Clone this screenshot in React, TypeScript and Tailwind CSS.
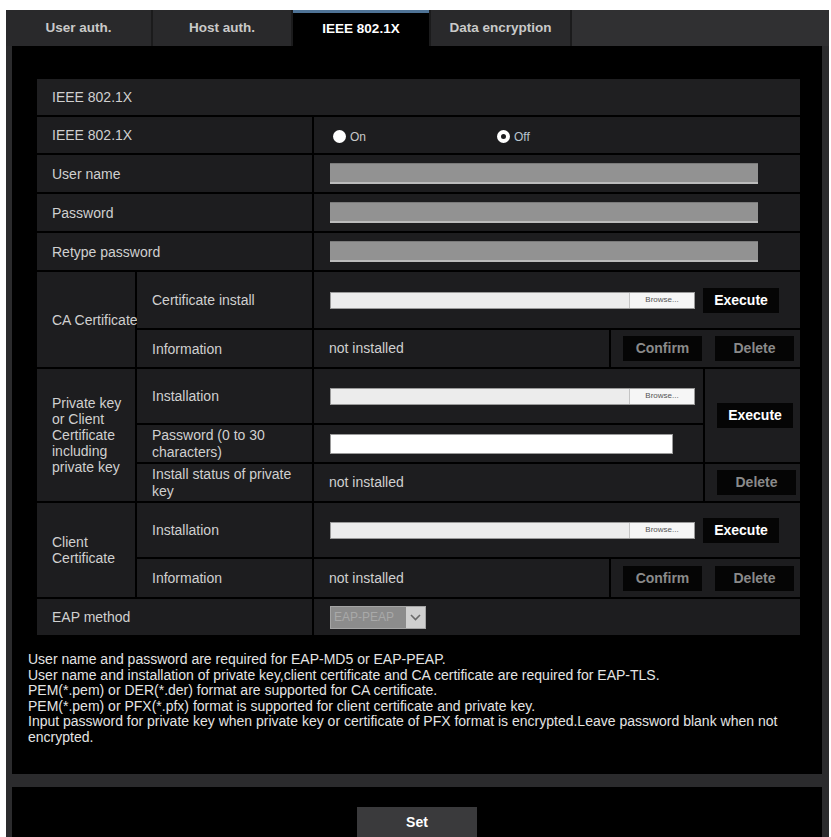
import React from "react";

const tabs = [
  { label: "User auth.", w: "w-[145px]" },
  { label: "Host auth.", w: "w-[138px]" },
  { label: "IEEE 802.1X", w: "w-[136px]", active: true },
  { label: "Data encryption", w: "w-[139px]" },
];

const notes = [
  "User name and password are required for EAP-MD5 or EAP-PEAP.",
  "User name and installation of private key,client certificate and CA certificate are required for EAP-TLS.",
  "PEM(*.pem) or DER(*.der) format are supported for CA certificate.",
  "PEM(*.pem) or PFX(*.pfx) format is supported for client certificate and private key.",
  "Input password for private key when private key or certificate of PFX format is encrypted.Leave password blank when not",
  "encrypted.",
];

function Cell({
  children,
  className = "",
}: {
  children?: React.ReactNode;
  className?: string;
}) {
  return (
    <div className={`bg-[#1d1d1f] flex items-center ${className}`}>
      {children}
    </div>
  );
}

function Label({
  children,
  className = "",
}: {
  children: React.ReactNode;
  className?: string;
}) {
  return (
    <Cell className={`pl-[15px] text-[14px] leading-[16px] text-[#d0d0d0] ${className}`}>
      <span>{children}</span>
    </Cell>
  );
}

function TextInput() {
  return (
    <div className="ml-[16px] h-[21px] w-[428px] bg-[#929292] border-t border-[#7a7a7a] border-b-2 border-b-[#bcbcbc]" />
  );
}

function FileInput() {
  return (
    <div className="flex h-[17px] w-[365px] border border-[#9a9a9a]">
      <div className="flex-1 bg-[#ececec]" />
      <div className="w-[65px] bg-[#f6f6f6] border-l border-[#c4c4c4] flex items-center justify-center text-[8px] text-[#555]">
        Browse...
      </div>
    </div>
  );
}

function Btn({ label, dim }: { label: string; dim?: boolean }) {
  return (
    <div
      className={`h-[25px] flex items-center justify-center bg-[#050505] font-bold text-[14px] ${
        dim ? "w-[79px] text-[#8a8a8a]" : "w-[76px] text-white"
      }`}
    >
      {label}
    </div>
  );
}

function InfoRow() {
  return (
    <>
      <Label>Information</Label>
      <Cell className="pl-[15px] text-[14px] text-[#d0d0d0]">not installed</Cell>
      <Cell className="col-span-2 pl-[12px] gap-[13px]">
        <Btn label="Confirm" dim />
        <Btn label="Delete" dim />
      </Cell>
    </>
  );
}

export default function App() {
  return (
    <div className="min-h-[837px] bg-white pt-[10px] pl-[6px] pr-[2px] font-['Liberation_Sans',Arial,sans-serif] overflow-hidden">
      <div className="bg-[#2b2b2d] h-[840px]">
        {/* tab bar */}
        <div className="flex h-[36px] gap-[2px] bg-[#1b1b1c]">
          {tabs.map((t) => (
            <div
              key={t.label}
              className={`${t.w} flex items-center justify-center text-[13.5px] font-bold ${
                t.active
                  ? "bg-black text-white border-t-[3px] border-[#4f7396]"
                  : "bg-[#29292b] text-[#c9c9c9]"
              }`}
            >
              {t.label}
            </div>
          ))}
          <div className="flex-1 bg-[#303032]" />
        </div>

        <div className="ml-[6px] mr-[7px] h-[728px] bg-black pt-[33px]">
          <div className="ml-[25px] w-[763px] grid grid-cols-[98px_175px_295px_92px_95px] grid-rows-[36px_36px_37px_37px_37px_56px_37px_54px_37px_37px_54px_38px_36px] gap-[2px]">
            <Label className="col-span-5 bg-[#1f1f21]">IEEE 802.1X</Label>

            <Label className="col-span-2">IEEE 802.1X</Label>
            <Cell className="col-span-3 pl-[19px] pt-[3px] text-[12px]">
              <div className="w-[164px] flex items-center gap-[4px] text-[#c8c8c8]">
                <span className="w-[13px] h-[13px] rounded-full bg-white" />
                On
              </div>
              <div className="flex items-center gap-[4px] text-[#b9c6d0]">
                <span className="w-[13px] h-[13px] rounded-full border-[4px] border-white bg-[#1d1d1f]" />
                Off
              </div>
            </Cell>

            <Label className="col-span-2">User name</Label>
            <Cell className="col-span-3">
              <TextInput />
            </Cell>

            <Label className="col-span-2">Password</Label>
            <Cell className="col-span-3">
              <TextInput />
            </Cell>

            <Label className="col-span-2">Retype password</Label>
            <Cell className="col-span-3">
              <TextInput />
            </Cell>

            {/* CA certificate */}
            <Label className="row-span-2 pl-[13px] whitespace-nowrap">CA Certificate</Label>
            <Label>Certificate install</Label>
            <Cell className="col-span-3 pl-[16px] gap-[8px]">
              <FileInput />
              <Btn label="Execute" />
            </Cell>
            <InfoRow />

            {/* Private key */}
            <Label className="row-span-3 leading-[15.5px]">
              Private key
              <br />
              or Client
              <br />
              Certificate
              <br />
              including
              <br />
              private key
            </Label>
            <Label>Installation</Label>
            <Cell className="col-span-2 pl-[16px]">
              <FileInput />
            </Cell>
            <Cell className="row-span-2 pl-[12px]">
              <Btn label="Execute" />
            </Cell>
            <Label className="leading-[17px]">
              Password (0 to 30
              <br />
              characters)
            </Label>
            <Cell className="col-span-2 pl-[16px]">
              <div className="h-[20px] w-[343px] bg-white border border-[#9a9a9a]" />
            </Cell>
            <Label className="leading-[17px]">
              Install status of private
              <br />
              key
            </Label>
            <Cell className="col-span-2 pl-[15px] text-[14px] text-[#d0d0d0]">not installed</Cell>
            <Cell className="pl-[12px]">
              <Btn label="Delete" dim />
            </Cell>

            {/* Client certificate */}
            <Label className="row-span-2 leading-[15.5px]">
              Client
              <br />
              Certificate
            </Label>
            <Label>Installation</Label>
            <Cell className="col-span-3 pl-[16px] gap-[8px]">
              <FileInput />
              <Btn label="Execute" />
            </Cell>
            <InfoRow />

            <Label className="col-span-2">EAP method</Label>
            <Cell className="col-span-3 pl-[16px]">
              <div className="flex h-[23px] w-[96px] border border-[#a5a5a5] bg-[#8c8c8c]">
                <span className="flex-1 pl-[3px] flex items-center text-[12px] text-[#a9a9a9]">
                  EAP-PEAP
                </span>
                <span className="w-[19px] bg-[#cfcfcf] flex items-center justify-center">
                  <svg width="11" height="7" viewBox="0 0 11 7">
                    <path d="M1 1l4.5 4.5L10 1" fill="none" stroke="#6a6a6a" strokeWidth="1.6" />
                  </svg>
                </span>
              </div>
            </Cell>
          </div>

          <div className="mt-[17px] pl-[16px] text-[14px] leading-[15.5px] text-[#e4e4e4] whitespace-nowrap">
            {notes.map((n) => (
              <div key={n}>{n}</div>
            ))}
          </div>
        </div>

        <div className="ml-[6px] mr-[7px] mt-[13px] h-[60px] bg-black flex justify-center">
          <div className="mt-[20px] w-[120px] h-[30px] bg-[#3a3a3c] flex items-center justify-center text-white font-bold text-[14px]">
            Set
          </div>
        </div>
      </div>
    </div>
  );
}
